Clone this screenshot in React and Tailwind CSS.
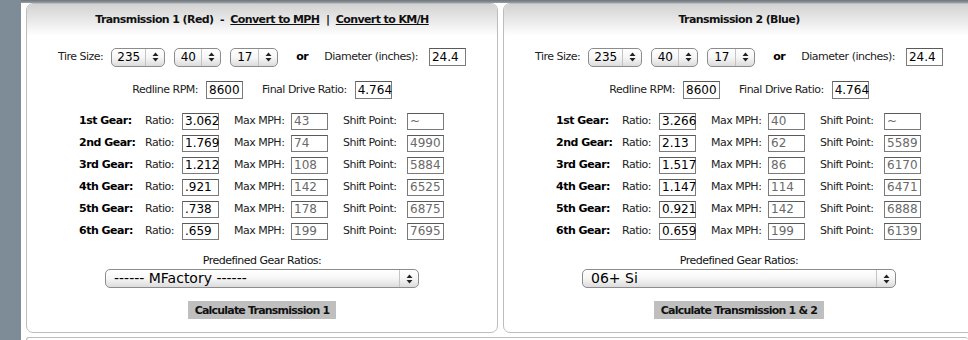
import React from 'react';

const font = { fontFamily: '"DejaVu Sans", Verdana, sans-serif' };

const Arrows = () => (
  <svg width="7" height="10" viewBox="0 0 7 10" className="shrink-0">
    <path d="M3.5 0.5 L6.5 4 L0.5 4 Z" fill="#222" />
    <path d="M0.5 6 L6.5 6 L3.5 9.5 Z" fill="#222" />
  </svg>
);

const Select = ({ value, width, wide }) => (
  <div
    className={`flex items-center h-[19px] rounded-[5px] border border-[#8c8c8c] bg-gradient-to-b from-white via-[#f6f6f6] to-[#dcdcdc] shadow-[inset_0_1px_0_#fff] tracking-normal ${width}`}
  >
    <span className={`flex-1 text-black ${wide ? 'pl-[8px] text-[14px]' : 'text-center text-[12px]'}`}>{value}</span>
    <span className="h-full w-[19px] flex items-center justify-center border-l border-[#c4c4c4]">
      <Arrows />
    </span>
  </div>
);

const Box = ({ value, gray, w = 'w-[37px]', h = 'h-[17px]' }) => (
  <div
    className={`${w} ${h} bg-white border border-[#7b7b7b] border-t-[#5a5a5a] flex items-center pl-[2px] text-[12px] leading-none tracking-normal ${gray ? 'text-[#6a6a6a]' : 'text-black'}`}
  >
    {value}
  </div>
);

const GearRow = ({ label, ratio, mph, shift }) => (
  <div className="flex items-center h-[22px] text-[11px] text-[#222]">
    <span className="w-[66px] font-bold text-black">{label}</span>
    <span className="w-[37px]">Ratio:</span>
    <Box value={ratio} />
    <span className="w-[15px]" />
    <span className="w-[57px]">Max MPH:</span>
    <Box value={mph} gray />
    <span className="w-[15px]" />
    <span className="w-[64px]">Shift Point:</span>
    <Box value={shift} gray />
  </div>
);

const Panel = ({ title, gears, preset, button }) => (
  <div className="w-[472px] h-[330px] shrink-0 rounded-[7px] border border-[#bdbdbd] overflow-hidden bg-white">
    <div className="h-[32px] flex items-center justify-center bg-gradient-to-b from-[#d2d2d2] to-white text-[11px] font-bold text-[#111] tracking-[-0.6px]">
      {title}
    </div>
    <div className="mt-[11px] h-[20px] flex items-center justify-center text-[11px] text-[#222]">
      <span>Tire Size:</span>
      <span className="w-[8px]" />
      <Select value="235" width="w-[54px]" />
      <span className="w-[9px]" />
      <Select value="40" width="w-[47px]" />
      <span className="w-[9px]" />
      <Select value="17" width="w-[48px]" />
      <span className="w-[18px]" />
      <span className="font-bold text-black">or</span>
      <span className="w-[16px]" />
      <span>Diameter (inches):</span>
      <span className="w-[11px]" />
      <Box value="24.4" h="h-[18px]" />
    </div>
    <div className="mt-[14px] h-[18px] flex items-center justify-center text-[11px] text-[#222]">
      <span>Redline RPM:</span>
      <span className="w-[8px]" />
      <Box value="8600" h="h-[18px]" />
      <span className="w-[19px]" />
      <span>Final Drive Ratio:</span>
      <span className="w-[8px]" />
      <Box value="4.764" h="h-[18px]" />
    </div>
    <div className="mt-[11px] ml-[52px]">
      {gears.map((g) => (
        <GearRow key={g[0]} label={g[0]} ratio={g[1]} mph={g[2]} shift={g[3]} />
      ))}
    </div>
    <div className="mt-[12px] h-[14px] flex items-center justify-center text-[11px] text-[#111]">
      Predefined Gear Ratios:
    </div>
    <div className="mt-[1px] flex justify-center">
      <Select value={preset} width="w-[314px]" wide />
    </div>
    <div className="mt-[13px] flex justify-center">
      <button
        className="h-[18px] px-[7px] bg-[#bfbfbf] text-[11px] font-bold text-[#111] leading-none tracking-[-0.8px]"
        style={font}
      >
        {button}
      </button>
    </div>
  </div>
);

const gears1 = [
  ['1st Gear:', '3.062', '43', '~'],
  ['2nd Gear:', '1.769', '74', '4990'],
  ['3rd Gear:', '1.212', '108', '5884'],
  ['4th Gear:', '.921', '142', '6525'],
  ['5th Gear:', '.738', '178', '6875'],
  ['6th Gear:', '.659', '199', '7695'],
];

const gears2 = [
  ['1st Gear:', '3.266', '40', '~'],
  ['2nd Gear:', '2.13', '62', '5589'],
  ['3rd Gear:', '1.517', '86', '6170'],
  ['4th Gear:', '1.147', '114', '6471'],
  ['5th Gear:', '0.921', '142', '6888'],
  ['6th Gear:', '0.659', '199', '6139'],
];

export default function App() {
  return (
    <div className="w-[968px] h-[340px] flex bg-white overflow-hidden tracking-[-0.5px]" style={font}>
      <div className="w-[21px] shrink-0 bg-[#7d8c96]" />
      <div className="flex-1 flex flex-col overflow-hidden">
        <div className="h-[3px] shrink-0 bg-gradient-to-b from-[#6a747b] to-[#9aa0a4]" />
        <div className="flex gap-[5px] pl-[5px]">
          <Panel
            title={
              <span>
                Transmission 1 (Red)&nbsp; -&nbsp; <span className="underline">Convert to MPH</span>&nbsp; |&nbsp;{' '}
                <span className="underline">Convert to KM/H</span>
              </span>
            }
            gears={gears1}
            preset="------ MFactory ------"
            button="Calculate Transmission 1"
          />
          <Panel
            title="Transmission 2 (Blue)"
            gears={gears2}
            preset="06+ Si"
            button="Calculate Transmission 1 & 2"
          />
        </div>
        <div className="ml-[5px] mt-[4px] h-[10px] rounded-t-[6px] border-t border-l border-[#bdbdbd]" />
      </div>
    </div>
  );
}
